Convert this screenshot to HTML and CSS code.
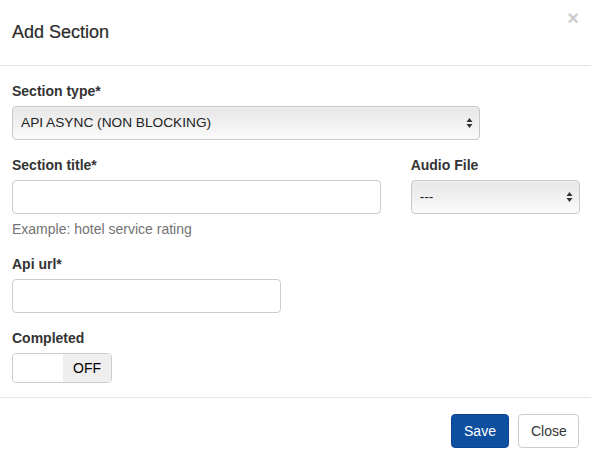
FILE: index.html
```html
<!DOCTYPE html>
<html>
<head>
<meta charset="utf-8">
<link rel="stylesheet" href="styles.css">
</head>
<body>
<div class="modal">
  <div class="modal-header">
    <h4 class="modal-title">Add Section</h4>
    <span class="close">&times;</span>
  </div>
  <div class="modal-body">
    <div class="form-group">
      <label class="label">Section type*</label>
      <div class="row">
        <div class="col col-10">
          <div class="select"><span>API ASYNC (NON BLOCKING)</span><svg class="arrows" width="7" height="12" viewBox="0 0 7 12"><path d="M3.5 1 L6.5 5 L0.5 5 Z M3.5 11 L6.5 7 L0.5 7 Z" fill="#333"/></svg></div>
        </div>
      </div>
    </div>
    <div class="row">
      <div class="col col-8">
        <div class="form-group">
          <label class="label">Section title*</label>
          <div class="input"></div>
          <div class="help">Example: hotel service rating</div>
        </div>
      </div>
      <div class="col col-4">
        <div class="form-group">
          <label class="label">Audio File</label>
          <div class="select"><span>---</span><svg class="arrows" width="7" height="12" viewBox="0 0 7 12"><path d="M3.5 1 L6.5 5 L0.5 5 Z M3.5 11 L6.5 7 L0.5 7 Z" fill="#333"/></svg></div>
        </div>
      </div>
    </div>
    <div class="form-group">
      <label class="label">Api url*</label>
      <div class="row">
        <div class="col col-6"><div class="input"></div></div>
      </div>
    </div>
    <div class="form-group last">
      <label class="label">Completed</label>
      <div class="switch"><span class="switch-blank"></span><span class="switch-off">OFF</span></div>
    </div>
  </div>
  <div class="modal-footer">
    <button class="btn btn-primary">Save</button>
    <button class="btn btn-default">Close</button>
  </div>
</div>
</body>
</html>
```
FILE: styles.css
```css
* { box-sizing: border-box; }
html, body { margin: 0; padding: 0; background: #fff; }
body {
  font-family: "Liberation Sans", Arial, Helvetica, sans-serif;
  font-size: 14px;
  line-height: 20px;
  color: #333;
}
.modal { width: 591px; }
.modal-header {
  position: relative;
  padding: 20px 12px 20px;
  border-bottom: 1px solid #e5e5e5;
}
.modal-title {
  margin: 0;
  font-size: 18px;
  font-weight: normal;
  line-height: 25px;
  color: #2b2b2b;
  -webkit-text-stroke: 0.2px #2b2b2b;
}
.close {
  position: absolute;
  right: 12px;
  top: 8px;
  font-size: 20px;
  font-weight: bold;
  line-height: 20px;
  color: #000;
  opacity: 0.2;
}
.modal-body { padding: 15px 11px 0 12px; }
.form-group { margin-bottom: 15px; }
.label {
  display: block;
  font-weight: bold;
  margin-bottom: 5px;
}
.row { display: flex; margin: 0 -15px; }
.col { padding: 0 15px; }
.col-10 { width: 83.3333%; }
.col-8 { width: 66.6667%; }
.col-6 { width: 50%; }
.col-4 { width: 33.3333%; }
.input {
  height: 34px;
  border: 1px solid #ccc;
  border-radius: 4px;
  background: #fff;
}
.select {
  height: 34px;
  border: 1px solid #c9c9c9;
  border-radius: 4px;
  background: linear-gradient(to bottom, #e7e7e7 0%, #f0f0f0 50%, #fbfbfb 100%);
  box-shadow: inset 0 1px 0 rgba(255,255,255,0.4);
  display: flex;
  align-items: center;
  justify-content: space-between;
  padding: 0 6px 0 8px;
  font-size: 13.7px;
  color: #222;
}
.arrows { display: block; }
.help {
  margin-top: 5px;
  margin-bottom: 10px;
  color: #737373;
}
.switch {
  display: flex;
  width: 100px;
  height: 30px;
  border: 1px solid #ccc;
  border-radius: 4px;
  overflow: hidden;
}
.switch-blank { width: 50px; background: #fff; }
.switch-off {
  flex: 1;
  background: #eee;
  color: #000;
  display: flex;
  align-items: center;
  justify-content: center;
  font-size: 14px;
}
.form-group.last { margin-bottom: 14px; }
.modal-footer {
  border-top: 1px solid #e5e5e5;
  padding: 16px 12px 13px;
  display: flex;
  justify-content: flex-end;
  gap: 9px;
}
.btn {
  font-family: inherit;
  font-size: 14px;
  line-height: 20px;
  height: 34px;
  padding: 6px 12px;
  border-radius: 4px;
  border: 1px solid transparent;
  cursor: pointer;
}
.btn-primary { background: #0e4f9f; border-color: #0c4690; color: #fff; width: 58px; }
.btn-default { background: #fff; border-color: #ccc; color: #333; width: 61px; }
```
